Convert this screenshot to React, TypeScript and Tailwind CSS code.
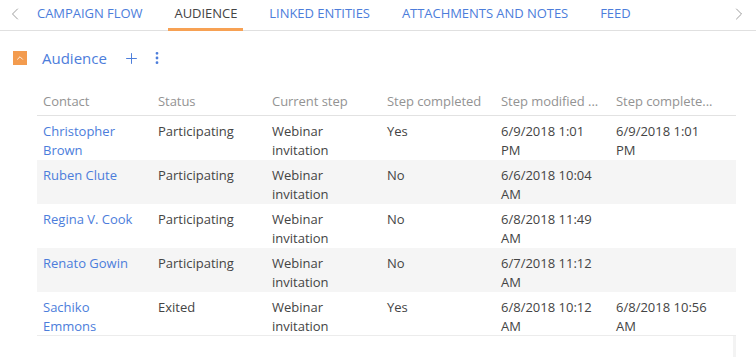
import { ChevronLeft, ChevronRight, ChevronUp, Plus, EllipsisVertical } from 'lucide-react';

interface Row {
  contact: string;
  status: string;
  step: string;
  completed: string;
  modified: string;
  completedOn: string;
}

const tabs = ['Campaign flow', 'Audience', 'Linked entities', 'Attachments and notes', 'Feed'];

const rows: Row[] = [
  { contact: 'Christopher Brown', status: 'Participating', step: 'Webinar invitation', completed: 'Yes', modified: '6/9/2018 1:01 PM', completedOn: '6/9/2018 1:01 PM' },
  { contact: 'Ruben Clute', status: 'Participating', step: 'Webinar invitation', completed: 'No', modified: '6/6/2018 10:04 AM', completedOn: '' },
  { contact: 'Regina V. Cook', status: 'Participating', step: 'Webinar invitation', completed: 'No', modified: '6/8/2018 11:49 AM', completedOn: '' },
  { contact: 'Renato Gowin', status: 'Participating', step: 'Webinar invitation', completed: 'No', modified: '6/7/2018 11:12 AM', completedOn: '' },
  { contact: 'Sachiko Emmons', status: 'Exited', step: 'Webinar invitation', completed: 'Yes', modified: '6/8/2018 10:12 AM', completedOn: '6/8/2018 10:56 AM' },
];

const cols = ['w-[115px]', 'w-[114px]', 'w-[115px]', 'w-[114px]', 'w-[115px]', 'w-[114px]'];

export default function App() {
  return (
    <div className="w-[756px] h-[357px] overflow-hidden bg-white font-['Open_Sans',sans-serif] text-[13px] text-[#444]">
      {/* Tabs */}
      <div className="relative flex h-[31px] items-stretch border-b border-[#e0e0e0]">
        <div className="flex w-[31px] items-center justify-center pr-[2px] pb-[3px] text-[#8a8a8a]">
          <ChevronLeft className="w-[20px] h-[20px]" strokeWidth={1} />
        </div>
        <div className="flex flex-1 gap-5 tracking-[-0.04px]">
          {tabs.map((t) => (
            <div
              key={t}
              className={`relative flex items-center px-[6px] pb-[3px] uppercase leading-[19px] ${
                t === 'Audience' ? 'text-[#444]' : 'text-[#4c7ddb]'
              }`}
            >
              {t}
              {t === 'Audience' && (
                <span className="absolute left-0 right-0 bottom-[-1px] h-[3px] bg-[#f7a154]" />
              )}
            </div>
          ))}
        </div>
        <div className="flex w-[34px] items-center justify-center pb-[3px] text-[#8a8a8a]">
          <ChevronRight className="w-[20px] h-[20px]" strokeWidth={1} />
        </div>
      </div>

      {/* Section header */}
      <div className="mt-[19px] flex h-[16px] items-center pl-[13px]">
        <div className="flex h-[14px] w-[14px] items-center justify-center bg-[#f39b4e]">
          <ChevronUp className="w-[10px] h-[10px] text-white" strokeWidth={2} />
        </div>
        <span className="ml-[15px] text-[15px] leading-[20px] text-[#4c7ddb]">Audience</span>
        <Plus className="ml-[16px] w-[17px] h-[17px] text-[#4c7ddb]" strokeWidth={1.4} />
        <EllipsisVertical className="ml-[9px] w-[16px] h-[16px] text-[#4c7ddb]" strokeWidth={2.2} />
      </div>

      {/* Table */}
      <div className="ml-[37px] mt-[22px] w-[699px]">
        <div className="flex h-[28px] items-center border-b border-[#e2e2e2] text-[#939393] leading-[19px] tracking-[-0.05px]">
          <div className={`${cols[0]} px-[6px]`}>Contact</div>
          <div className={`${cols[1]} px-[6px]`}>Status</div>
          <div className={`${cols[2]} px-[6px]`}>Current step</div>
          <div className={`${cols[3]} px-[6px] whitespace-nowrap`}>Step completed</div>
          <div className={`${cols[4]} px-[6px] whitespace-nowrap`}>Step modified ...</div>
          <div className={`${cols[5]} px-[6px] whitespace-nowrap`}>Step complete...</div>
        </div>
        {rows.map((r, i) => (
          <div
            key={r.contact}
            className={`flex h-[44px] items-start pt-[6px] leading-[19px] ${i % 2 === 1 ? 'bg-[#f5f5f5]' : ''} ${
              i === rows.length - 1 ? 'border-b border-[#ececec]' : ''
            }`}
          >
            <div className={`${cols[0]} px-[6px] text-[#4c7ddb]`}>{r.contact}</div>
            <div className={`${cols[1]} px-[6px]`}>{r.status}</div>
            <div className={`${cols[2]} px-[6px]`}>{r.step}</div>
            <div className={`${cols[3]} px-[6px]`}>{r.completed}</div>
            <div className={`${cols[4]} pl-[6px] pr-[14px]`}>{r.modified}</div>
            <div className={`${cols[5]} pl-[6px] pr-[14px]`}>{r.completedOn}</div>
          </div>
        ))}
        <div className="h-[21px] w-[699px] border-r-[3px] border-[#f3f3f3]" />
      </div>
    </div>
  );
}
